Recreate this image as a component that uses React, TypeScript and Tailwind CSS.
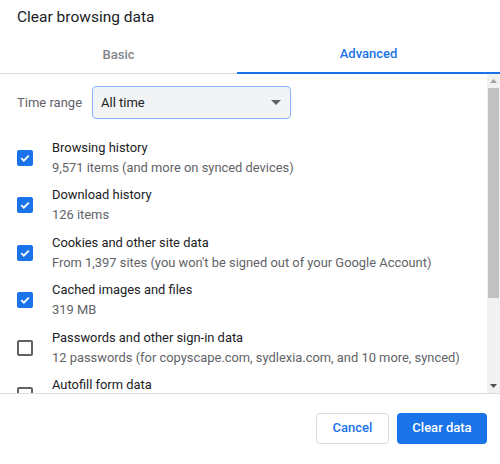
import React from "react";

const items = [
  { title: "Browsing history", sub: "9,571 items (and more on synced devices)", checked: true },
  { title: "Download history", sub: "126 items", checked: true },
  { title: "Cookies and other site data", sub: "From 1,397 sites (you won't be signed out of your Google Account)", checked: true },
  { title: "Cached images and files", sub: "319 MB", checked: true },
  { title: "Passwords and other sign-in data", sub: "12 passwords (for copyscape.com, sydlexia.com, and 10 more, synced)", checked: false },
  { title: "Autofill form data", sub: "", checked: false },
];

function Check({ checked }: { checked: boolean }) {
  if (checked) {
    return (
      <div className="w-4 h-4 rounded-[2px] bg-[#1a73e8] flex items-center justify-center shrink-0">
        <svg width="12" height="12" viewBox="0 0 12 12">
          <path d="M2.2 6.2 L4.8 8.7 L9.8 3.6" fill="none" stroke="white" strokeWidth="1.8" />
        </svg>
      </div>
    );
  }
  return <div className="w-4 h-4 rounded-[2px] border-2 border-[#5f6368] shrink-0" />;
}

export default function App() {
  return (
    <div className="w-[500px] h-[464px] bg-white flex flex-col overflow-hidden" style={{ fontFamily: "Roboto, 'Liberation Sans', sans-serif" }}>
      <div className="h-[36px] pl-[17px] flex items-center text-[15.5px] text-[#202124]">Clear browsing data</div>
      <div className="flex h-[38px] border-b border-[#dadce0] text-[13px] font-medium">
        <div className="w-[237px] flex items-center justify-center text-[#80868b]">Basic</div>
        <div className="flex-1 flex items-center justify-center text-[#1a73e8] border-b-2 border-[#1a73e8] mb-[-1px]">Advanced</div>
      </div>
      <div className="h-[320px] flex border-b border-[#dadce0]">
        <div className="flex-1 overflow-hidden pt-[12px]">
          <div className="flex items-center pl-[17px] h-[33px]">
            <span className="text-[13px] text-[#5f6368] w-[75px]">Time range</span>
            <div className="w-[199px] h-[33px] rounded-[4px] border-[1.5px] border-[#8ab4f8] bg-[#f1f3f4] flex items-center justify-between pl-[8px] pr-[9px]">
              <span className="text-[13px] text-[#202124]">All time</span>
              <svg width="10" height="5" viewBox="0 0 10 5"><path d="M0 0 L10 0 L5 5 Z" fill="#5f6368" /></svg>
            </div>
          </div>
          <div className="mt-[15px] flex flex-col">
            {items.map((it) => (
              <div key={it.title} className="flex items-center h-[47.5px] pl-[17px] shrink-0">
                <Check checked={it.checked} />
                <div className="ml-[19px] flex flex-col text-[12.9px] leading-[20px]">
                  <span className="text-[#202124]">{it.title}</span>
                  <span className="text-[#5f6368]">{it.sub || "\u00a0"}</span>
                </div>
              </div>
            ))}
          </div>
        </div>
        <div className="w-[13px] bg-[#f1f1f1] flex flex-col items-stretch">
          <div className="h-[14px] flex items-center justify-center">
            <svg width="7" height="4" viewBox="0 0 7 4"><path d="M0 4 L7 4 L3.5 0 Z" fill="#a3a3a3" /></svg>
          </div>
          <div className="h-[210px] bg-[#c1c1c1] mx-[1px]" />
          <div className="flex-1" />
          <div className="h-[14px] flex items-center justify-center">
            <svg width="7" height="4" viewBox="0 0 7 4"><path d="M0 0 L7 0 L3.5 4 Z" fill="#505050" /></svg>
          </div>
        </div>
      </div>
      <div className="flex-1 flex items-center justify-end pr-[13px] gap-[8px] pb-[2px]">
        <button className="w-[73px] h-[31px] rounded-[4px] border border-[#dadce0] text-[13px] font-medium text-[#1a73e8] bg-white">Cancel</button>
        <button className="w-[90px] h-[31px] rounded-[4px] bg-[#1a73e8] text-[13px] font-medium text-white">Clear data</button>
      </div>
    </div>
  );
}
